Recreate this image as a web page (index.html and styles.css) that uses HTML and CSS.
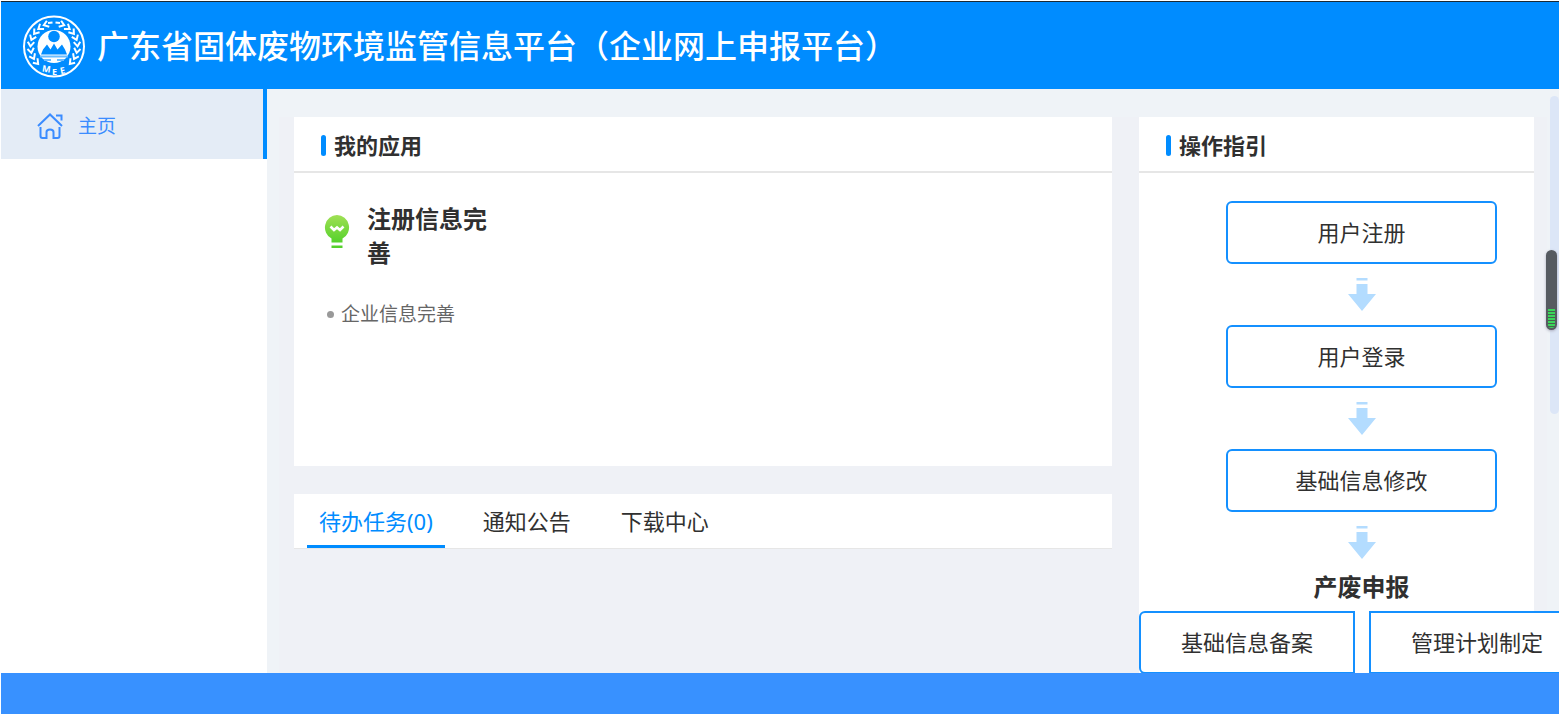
FILE: index.html
```html
<!DOCTYPE html>
<html lang="zh-CN">
<head>
    <meta charset="UTF-8">
    <meta name="viewport" content="width=device-width, initial-scale=1.0">
    <title>广东省固体废物环境监管信息平台</title>
    <link rel="stylesheet" href="styles.css">
</head>
<body>
    <header class="header">
        <svg class="logo" viewBox="10 8 62 64" aria-hidden="true">
            <defs>
                <path id="leaf" d="M44 14 L39.500 17 L44 20.500"/>
                <g id="branch">
                    <path d="M35 17 L39.500 16.500"/>
                    <use href="#leaf" transform="rotate(-22 41 40.500)"/>
                    <use href="#leaf" transform="rotate(-38 41 40.500)"/>
                    <use href="#leaf" transform="rotate(-54 41 40.500)"/>
                    <use href="#leaf" transform="rotate(-70 41 40.500)"/>
                    <use href="#leaf" transform="rotate(-86 41 40.500)"/>
                    <use href="#leaf" transform="rotate(-102 41 40.500)"/>
                    <use href="#leaf" transform="rotate(-118 41 40.500)"/>
                    <use href="#leaf" transform="rotate(-134 41 40.500)"/>
                </g>
            </defs>
            <circle cx="41" cy="40.500" r="30" fill="none" stroke="#fff" stroke-width="2"/>
            <g fill="none" stroke="#fff" stroke-width="2">
                <use href="#branch"/>
                <use href="#branch" transform="translate(82 0) scale(-1 1)"/>
            </g>
            <circle cx="41" cy="40.500" r="16.500" fill="#fff"/>
            <circle cx="41" cy="30.500" r="5.800" fill="#008cff"/>
            <path d="M28 48.500 L30 43.500 L34 38.500 L37.500 43.500 L41 37.500 L44.500 43.500 L49 38.500 L52 43.500 L54 48.500 Z" fill="#008cff"/>
            <path d="M27 50.500 H55 M31 54 H38 M44 54 H51" stroke="#6bbcff" stroke-width="1.800"/>
            <text class="logo-text" x="29" y="66" transform="rotate(8 32 64)">M</text>
            <text class="logo-text" x="39" y="69">E</text>
            <text class="logo-text" x="47" y="68" transform="rotate(-12 49 65)">E</text>
        </svg>
        <h1>广东省固体废物环境监管信息平台（企业网上申报平台）</h1>
    </header>

    <div class="layout">
        <nav class="sidebar">
            <a class="menu-item active" href="#">
                <svg class="menu-icon" viewBox="0 0 26 26" aria-hidden="true">
                    <path d="M1 13 L13 1.500 L25 13 M19 2.500 H24.500 V7.500 M3.500 14 V23 Q3.500 25 5.500 25 H9.500 V19 Q9.500 16.500 13 16.500 Q16.500 16.500 16.500 19 V25 H20.500 Q22.500 25 22.500 23 V14"/>
                </svg>
                <span>主页</span>
            </a>
        </nav>

        <main class="content">
            <div class="board">
                <div class="main-column">
                    <section class="panel apps">
                        <h2 class="panel-title">我的应用</h2>
                        <div class="app">
                            <svg class="app-icon" viewBox="0 0 26 34" aria-hidden="true">
                                <defs>
                                    <linearGradient id="green" x1="0" y1="0" x2="0" y2="1">
                                        <stop offset="0" stop-color="#a0e055"/>
                                        <stop offset="1" stop-color="#55d12c"/>
                                    </linearGradient>
                                </defs>
                                <path d="M13 0 A12.500 12.500 0 0 1 18.500 23.500 V27.500 H7.500 V23.500 A12.500 12.500 0 0 1 13 0 Z" fill="url(#green)"/>
                                <path d="M7.500 30.500 H18.500 V33 H7.500 Z" fill="#55d12c"/>
                                <path d="M6.500 11.500 L10 15 L13 12.500 L16 15 L19.500 11.500" fill="none" stroke="#fff" stroke-width="2.600"/>
                            </svg>
                            <h3>注册信息完善</h3>
                        </div>
                        <ul class="app-links">
                            <li><a href="#">企业信息完善</a></li>
                        </ul>
                    </section>

                    <div class="panel tabs">
                        <button class="tab active">待办任务(0)</button>
                        <button class="tab">通知公告</button>
                        <button class="tab">下载中心</button>
                    </div>
                </div>

                <section class="panel guide">
                    <h2 class="panel-title">操作指引</h2>
                    <div class="steps">
                        <button class="step">用户注册</button>
                        <svg class="arrow" viewBox="0 0 28 33" aria-hidden="true"><path d="M8.500 0 H19.500 V2.500 H8.500 Z M8.500 6 H19.500 V16 H28 L14 33 L0 16 H8.500 Z"/></svg>
                        <button class="step">用户登录</button>
                        <svg class="arrow" viewBox="0 0 28 33" aria-hidden="true"><path d="M8.500 0 H19.500 V2.500 H8.500 Z M8.500 6 H19.500 V16 H28 L14 33 L0 16 H8.500 Z"/></svg>
                        <button class="step">基础信息修改</button>
                        <svg class="arrow" viewBox="0 0 28 33" aria-hidden="true"><path d="M8.500 0 H19.500 V2.500 H8.500 Z M8.500 6 H19.500 V16 H28 L14 33 L0 16 H8.500 Z"/></svg>
                        <h3>产废申报</h3>
                    </div>
                    <div class="step-row">
                        <button class="step first">基础信息备案</button>
                        <button class="step next">管理计划制定</button>
                    </div>
                </section>
            </div>
            <div class="scroll-track"></div>
            <div class="meter"><div class="meter-level"></div></div>
        </main>
    </div>

    <footer class="footer"></footer>
</body>
</html>
```
FILE: styles.css
```css
* {
    box-sizing: border-box;
}

body {
    display: flex;
    flex-direction: column;
    height: 100vh;
    margin: 0;
    padding: 1px 1px 3px;
    overflow: hidden;
    background: #fff;
    color: #303030;
    font-family: "Noto Sans", "Noto Sans CJK SC", sans-serif;
}

h1, h2, h3, ul {
    margin: 0;
    padding: 0;
}

a {
    color: inherit;
    text-decoration: none;
}

button {
    padding: 0;
    border: none;
    background: #fff;
    color: inherit;
    font-family: inherit;
    font-size: 22px;
    cursor: pointer;
}

/* header */
.header {
    display: flex;
    flex: none;
    align-items: center;
    gap: 12px;
    height: 88px;
    padding-left: 22px;
    border-top: 1px solid #1b2a35;
    background: #008cff;
    color: #fff;
}

.header h1 {
    font-size: 32px;
    font-weight: 500;
    line-height: 48px;
    white-space: nowrap;
}

.logo {
    width: 62px;
    height: 64px;
}

.logo-text {
    fill: #fff;
    font-size: 9px;
    font-weight: bold;
}

/* layout */
.layout {
    display: flex;
    flex: 1;
    min-height: 0;
}

.sidebar {
    flex: none;
    width: 266px;
    background: #fff;
}

.menu-item {
    display: flex;
    align-items: center;
    gap: 15px;
    height: 70px;
    padding: 4px 36px 0;
    color: #3b8cff;
    font-size: 19px;
    line-height: 28px;
}

.menu-item.active {
    border-right: 4px solid #008cff;
    background: #e4ecf6;
}

.menu-icon {
    width: 26px;
    height: 26px;
    fill: none;
    stroke: #3b8cff;
    stroke-width: 2;
}

.content {
    position: relative;
    flex: 1;
    min-width: 0;
    padding: 28px 12px 0;
    overflow: hidden;
    background: #eff3f7;
}

.board {
    display: grid;
    grid-template-columns: 818fr 395fr;
    gap: 27px;
    min-height: 100%;
    padding: 0 13px 0 15px;
    background: #eff1f6;
}

.main-column {
    display: flex;
    flex-direction: column;
    gap: 28px;
    min-width: 0;
}

.panel {
    min-width: 0;
    background: #fff;
}

.panel-title {
    display: flex;
    align-items: center;
    gap: 8px;
    height: 56px;
    padding: 2px 27px 0;
    border-bottom: 2px solid #e6e6e6;
    font-size: 22px;
    line-height: 32px;
}

.panel-title::before {
    width: 5px;
    height: 21px;
    border-radius: 3px;
    background: #008cff;
    content: "";
}

/* apps */
.apps {
    min-height: 349px;
}

.app {
    display: flex;
    gap: 17px;
    width: 212px;
    padding: 29px 0 0 30px;
}

.app-icon {
    flex: none;
    width: 26px;
    height: 34px;
    margin-top: 13px;
}

.app h3 {
    font-size: 24px;
    line-height: 34px;
}

.app-links {
    padding: 30px 33px 0;
    color: #666;
    font-size: 19px;
    line-height: 28px;
    list-style: none;
}

.app-links li {
    display: flex;
    align-items: center;
    gap: 7px;
}

.app-links li::before {
    width: 7px;
    height: 7px;
    border-radius: 50%;
    background: #999;
    content: "";
}

/* tabs */
.tabs {
    display: flex;
    gap: 26px;
    height: 55px;
    padding: 0 13px;
    border-bottom: 1px solid #e6e6e6;
}

.tab {
    padding: 2px 12px 0;
    border-bottom: 3px solid transparent;
    line-height: 32px;
}

.tab.active {
    border-bottom-color: #008cff;
    color: #008cff;
}

/* guide */
.steps {
    display: flex;
    flex-direction: column;
    align-items: center;
    gap: 14px;
    padding: 28px 37px 10px 87px;
}

.step {
    width: 100%;
    height: 63px;
    padding-bottom: 4px;
    border: 2px solid #1490ff;
    border-radius: 6px;
}

.arrow {
    flex: none;
    width: 28px;
    height: 33px;
    fill: #b3dcff;
}

.steps h3 {
    font-size: 24px;
    line-height: 28px;
}

.step-row {
    display: flex;
    gap: 14px;
}

.step-row .step {
    flex: none;
    width: 216px;
}

.step-row .first {
    border-radius: 6px 0 0 6px;
}

.step-row .next {
    border-radius: 0;
}

/* right edge */
.scroll-track {
    position: absolute;
    top: 7px;
    right: 0;
    width: 9px;
    height: 318px;
    border-radius: 5px;
    background: #dce6f7;
}

.meter {
    position: absolute;
    top: 161px;
    right: 2px;
    display: flex;
    align-items: flex-end;
    width: 11px;
    height: 80px;
    padding: 2px;
    border-radius: 6px;
    background: #565b61;
    box-shadow: 0 1px 3px #aab;
}

.meter-level {
    width: 100%;
    height: 19px;
    border-radius: 0 0 4px 4px;
    background: repeating-linear-gradient(#3bd65b 0 2px, #47644f 2px 3px);
}

/* footer */
.footer {
    flex: none;
    height: 41px;
    background: #3891ff;
}
```
